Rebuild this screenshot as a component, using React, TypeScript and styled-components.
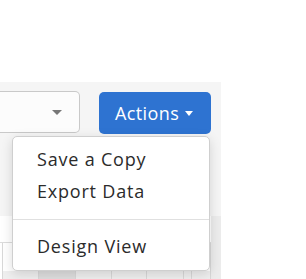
import React from 'react';
import styled, { createGlobalStyle } from 'styled-components';

const GlobalStyle = createGlobalStyle`
  html, body {
    margin: 0;
    padding: 0;
    background: #ffffff;
  }
  body {
    font-family: 'Open Sans', 'Liberation Sans', sans-serif;
    color: #2b2b2b;
  }
`;

const Page = styled.div`
  padding-top: 82px;
  width: 306px;
  height: 279px;
  box-sizing: border-box;
  overflow: hidden;
`;

const Workspace = styled.div`
  position: relative;
  width: 221px;
  height: 197px;
  display: flex;
  flex-direction: column;
`;

const Toolbar = styled.div`
  height: 135px;
  box-sizing: border-box;
  background: #f5f5f5;
  display: flex;
  align-items: flex-start;
  gap: 19px;
  padding: 9px 10px 0 0;
`;

const Select = styled.div`
  width: 80px;
  height: 42px;
  box-sizing: border-box;
  background: #fcfcfc;
  border: 1px solid #c9c9c9;
  border-left: none;
  border-radius: 0 5px 5px 0;
  display: flex;
  align-items: center;
  justify-content: flex-end;
  padding-right: 17px;
`;

const Caret = styled.span<{ color: string; w: number }>`
  display: inline-block;
  width: 0;
  height: 0;
  border-left: ${(p) => p.w / 2}px solid transparent;
  border-right: ${(p) => p.w / 2}px solid transparent;
  border-top: ${(p) => Math.round(p.w / 2)}px solid ${(p) => p.color};
`;

const ActionButton = styled.button`
  width: 112px;
  height: 42px;
  margin-top: 1px;
  box-sizing: border-box;
  background: #2e73d1;
  border: none;
  border-radius: 5px;
  color: #ffffff;
  font-family: inherit;
  font-size: 18px;
  letter-spacing: 0.4px;
  display: flex;
  align-items: center;
  gap: 6px;
  padding: 0 0 0 16px;
  cursor: pointer;
`;

const Sheet = styled.div`
  flex: 1;
  display: flex;
  background: #ffffff;
`;

const SheetBody = styled.div`
  flex: 1;
  display: flex;
  flex-direction: column;
  padding-top: 26px;
`;

const Scrollbar = styled.div`
  width: 10px;
  background: #ececec;
`;

const GridRow = styled.div<{ shade?: boolean }>`
  display: flex;
  height: ${(p) => (p.shade ? 8 : 28)}px;
  border-top: ${(p) => (p.shade ? 'none' : '1px solid #dcdcdc')};
`;

const Cell = styled.div<{ w: number; tone?: string }>`
  width: ${(p) => p.w}px;
  flex-shrink: 0;
  box-sizing: border-box;
  border-right: 1px solid #d8d8d8;
  background: ${(p) => p.tone ?? 'transparent'};
`;

const Menu = styled.div`
  position: absolute;
  top: 54px;
  left: 12px;
  width: 198px;
  box-sizing: border-box;
  background: #ffffff;
  border: 1px solid #cfcfcf;
  border-radius: 5px;
  box-shadow: 0 3px 12px rgba(0, 0, 0, 0.14);
  padding: 6px 0 8px;
`;

const MenuItem = styled.div`
  height: 32px;
  display: flex;
  align-items: center;
  padding-left: 24px;
  font-size: 18px;
  letter-spacing: 0.8px;
  color: #2b2b2b;
`;

const Divider = styled.div`
  height: 1px;
  background: #e0e0e0;
  margin: 12px 0 10px;
`;

const columns = [3, 36, 37, 36, 35, 37, 8, 19];

export default function App() {
  return (
    <Page>
      <GlobalStyle />
      <Workspace>
        <Toolbar>
          <Select>
            <Caret color="#777777" w={10} />
          </Select>
          <ActionButton>
            Actions
            <Caret color="#ffffff" w={9} />
          </ActionButton>
        </Toolbar>
        <Sheet>
          <SheetBody>
            <GridRow>
              {columns.map((w, i) => (
                <Cell key={i} w={w} />
              ))}
            </GridRow>
            <GridRow shade>
              {columns.map((w, i) => (
                <Cell key={i} w={w} tone={i === 0 ? '#ffffff' : i === 2 ? '#dedede' : '#efefef'} />
              ))}
            </GridRow>
          </SheetBody>
          <Scrollbar />
        </Sheet>
        <Menu>
          <MenuItem>Save a Copy</MenuItem>
          <MenuItem>Export Data</MenuItem>
          <Divider />
          <MenuItem>Design View</MenuItem>
        </Menu>
      </Workspace>
    </Page>
  );
}
